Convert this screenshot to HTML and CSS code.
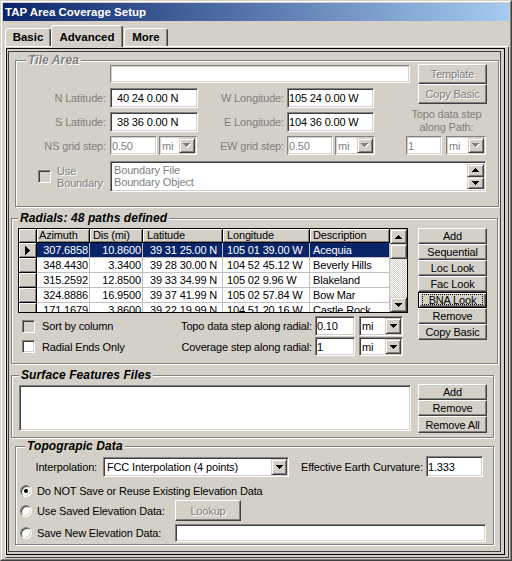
FILE: index.html
```html
<!DOCTYPE html>
<html>
<head>
<meta charset="utf-8">
<title>TAP Area Coverage Setup</title>
<link rel="stylesheet" href="styles.css">
</head>
<body>
<div class="window"><div class="window-inner">
  <div class="titlebar">TAP Area Coverage Setup</div>
  <div class="tabs">
    <div class="tab tab-basic">Basic</div>
    <div class="tab tab-adv">Advanced</div>
    <div class="tab tab-more">More</div>
  </div>
  <div class="page"><div class="frame1"><div class="frame2">

    <!-- Tile Area -->
    <div class="group g-tile">
      <div class="legend lg-tile emb">Tile Area</div>
      <div class="tile-top">
        <div class="tile-left">
          <div class="trow t1"><div class="edit soft w300 ml94"></div></div>
          <div class="trow t2">
            <span class="lbl lw94 gray">N Latitude:</span>
            <div class="edit w88 lat">40 24 0.00 N</div>
            <span class="lbl lw89 gray">W Longitude:</span>
            <div class="edit w87">105 24 0.00 W</div>
          </div>
          <div class="trow t3">
            <span class="lbl lw94 gray">S Latitude:</span>
            <div class="edit w88 lat">38 36 0.00 N</div>
            <span class="lbl lw89 gray">E Longitude:</span>
            <div class="edit w87">104 36 0.00 W</div>
          </div>
          <div class="trow t4">
            <span class="lbl lw94 gray">NS grid step:</span>
            <div class="edit soft gray w47">0.50</div>
            <div class="combo soft dis w38 ml2"><span class="ctext">mi</span><span class="cbtn"><svg class="ar" width="8" height="5" viewBox="0 0 8 5"><path fill="#fff" d="M1 1h7v1H1zM2 2h5v1H2zM3 3h3v1H3zM4 4h1v1H4z"/><path fill="#808080" d="M0 0h7v1H0zM1 1h5v1H1zM2 2h3v1H2zM3 3h1v1H3z"/></svg></span></div>
            <span class="lbl lw90 gray">EW grid step:</span>
            <div class="edit soft gray w46">0.50</div>
            <div class="combo soft dis w40 ml2"><span class="ctext">mi</span><span class="cbtn"><svg class="ar" width="8" height="5" viewBox="0 0 8 5"><path fill="#fff" d="M1 1h7v1H1zM2 2h5v1H2zM3 3h3v1H3zM4 4h1v1H4z"/><path fill="#808080" d="M0 0h7v1H0zM1 1h5v1H1zM2 2h3v1H2zM3 3h1v1H3z"/></svg></span></div>
          </div>
        </div>
        <div class="tile-right">
          <div class="btn dis tb1">Template</div>
          <div class="btn dis tb2">Copy Basic</div>
          <div class="topo-path gray">Topo data step<br>along Path:</div>
          <div class="trow tr-topo">
            <div class="edit soft gray w36">1</div>
            <div class="combo soft dis w40"><span class="ctext">mi</span><span class="cbtn"><svg class="ar" width="8" height="5" viewBox="0 0 8 5"><path fill="#fff" d="M1 1h7v1H1zM2 2h5v1H2zM3 3h3v1H3zM4 4h1v1H4z"/><path fill="#808080" d="M0 0h7v1H0zM1 1h5v1H1zM2 2h3v1H2zM3 3h1v1H3z"/></svg></span></div>
          </div>
        </div>
      </div>
      <div class="tile-bottom">
        <div class="ub">
          <div class="chk graybox ub-chk"></div>
          <div class="ub-lbl emb">Use<br>Boundary</div>
        </div>
        <div class="listbox lb-bound">
          <div class="lb-items gray"><div>Boundary File</div><div>Boundary Object</div></div>
          <div class="lb-sb">
            <div class="sbtn"><svg width="7" height="4" viewBox="0 0 7 4"><path d="M3 0h1v1H3zM2 1h3v1H2zM1 2h5v1H1zM0 3h7v1H0z"/></svg></div>
            <div class="sbtn"><svg width="7" height="4" viewBox="0 0 7 4"><path d="M0 0h7v1H0zM1 1h5v1H1zM2 2h3v1H2zM3 3h1v1H3z"/></svg></div>
          </div>
        </div>
      </div>
    </div>

    <!-- Radials -->
    <div class="group g-rad">
      <div class="legend lg-rad">Radials: 48 paths defined</div>
      <div class="rad-body">
        <div class="rad-left">
          <div class="sgrid">
            <div class="sg-cells">
              <div class="sg-row sg-head">
                <div class="c fx c0"></div>
                <div class="c fx c1 hp2">Azimuth</div>
                <div class="c fx c2 hp3">Dis (mi)</div>
                <div class="c fx c3 hp4">Latitude</div>
                <div class="c fx c4 hp4">Longitude</div>
                <div class="c fx c5 hp3">Description</div>
              </div>
              <div class="sg-row sel">
                <div class="c fx c0"><svg width="5" height="9" viewBox="0 0 5 9"><path d="M0 0h1v9H0zM1 1h1v7H1zM2 2h1v5H2zM3 3h1v3H3zM4 4h1v1H4z"/></svg></div>
                <div class="c c1 num">307.6858</div>
                <div class="c c2 num">10.8600</div>
                <div class="c c3 latc">39 31 25.00 N</div>
                <div class="c c4 lon">105 01 39.00 W</div>
                <div class="c c5 desc">Acequia</div>
              </div>
              <div class="sg-row">
                <div class="c fx c0"></div>
                <div class="c c1 num">348.4430</div>
                <div class="c c2 num">3.3400</div>
                <div class="c c3 latc">39 28 30.00 N</div>
                <div class="c c4 lon">104 52 45.12 W</div>
                <div class="c c5 desc">Beverly Hills</div>
              </div>
              <div class="sg-row">
                <div class="c fx c0"></div>
                <div class="c c1 num">315.2592</div>
                <div class="c c2 num">12.8500</div>
                <div class="c c3 latc">39 33 34.99 N</div>
                <div class="c c4 lon">105 02 9.96 W</div>
                <div class="c c5 desc">Blakeland</div>
              </div>
              <div class="sg-row">
                <div class="c fx c0"></div>
                <div class="c c1 num">324.8886</div>
                <div class="c c2 num">16.9500</div>
                <div class="c c3 latc">39 37 41.99 N</div>
                <div class="c c4 lon">105 02 57.84 W</div>
                <div class="c c5 desc">Bow Mar</div>
              </div>
              <div class="sg-row">
                <div class="c fx c0"></div>
                <div class="c c1 num">171.1679</div>
                <div class="c c2 num">3.8600</div>
                <div class="c c3 latc">39 22 19.99 N</div>
                <div class="c c4 lon">104 51 20.16 W</div>
                <div class="c c5 desc">Castle Rock</div>
              </div>
            </div>
            <div class="vscroll">
              <div class="vbtn"><svg width="7" height="4" viewBox="0 0 7 4"><path d="M3 0h1v1H3zM2 1h3v1H2zM1 2h5v1H1zM0 3h7v1H0z"/></svg></div>
              <div class="vthumb"></div>
              <div class="vtrack"></div>
              <div class="vbtn"><svg width="7" height="4" viewBox="0 0 7 4"><path d="M0 0h7v1H0zM1 1h5v1H1zM2 2h3v1H2zM3 3h1v1H3z"/></svg></div>
            </div>
          </div>
          <div class="rad-row ra">
            <div class="chk graybox"></div><span class="chk-lbl">Sort by column</span>
            <span class="rlabel">Topo data step along radial:</span>
            <div class="edit w40">0.10</div>
            <div class="combo w44 ml4"><span class="ctext">mi</span><span class="cbtn"><svg class="ar" width="7" height="4" viewBox="0 0 7 4"><path d="M0 0h7v1H0zM1 1h5v1H1zM2 2h3v1H2zM3 3h1v1H3z"/></svg></span></div>
          </div>
          <div class="rad-row rb">
            <div class="chk"></div><span class="chk-lbl">Radial Ends Only</span>
            <span class="rlabel">Coverage step along radial:</span>
            <div class="edit w40">1</div>
            <div class="combo w44 ml4"><span class="ctext">mi</span><span class="cbtn"><svg class="ar" width="7" height="4" viewBox="0 0 7 4"><path d="M0 0h7v1H0zM1 1h5v1H1zM2 2h3v1H2zM3 3h1v1H3z"/></svg></span></div>
          </div>
        </div>
        <div class="btncol rad-btns">
          <div class="btn">Add</div>
          <div class="btn">Sequential</div>
          <div class="btn">Loc Look</div>
          <div class="btn">Fac Look</div>
          <div class="btn focus"><span class="focus-rect">BNA Look</span></div>
          <div class="btn">Remove</div>
          <div class="btn">Copy Basic</div>
        </div>
      </div>
    </div>

    <!-- Surface Features Files -->
    <div class="group g-surf">
      <div class="legend lg-surf">Surface Features Files</div>
      <div class="surf-body">
        <div class="listbox lb-surf"></div>
        <div class="btncol surf-btns">
          <div class="btn b16">Add</div>
          <div class="btn b16">Remove</div>
          <div class="btn b17">Remove All</div>
        </div>
      </div>
    </div>

    <!-- Topograpic Data -->
    <div class="group g-topo">
      <div class="legend lg-topo">Topograpic Data</div>
      <div class="topo-r1">
        <span class="lbl-interp">Interpolation:</span>
        <div class="combo combo-interp"><span class="ctext">FCC Interpolation (4 points)</span><span class="cbtn"><svg class="ar" width="7" height="4" viewBox="0 0 7 4"><path d="M0 0h7v1H0zM1 1h5v1H1zM2 2h3v1H2zM3 3h1v1H3z"/></svg></span></div>
        <span class="lbl-eec">Effective Earth Curvature:</span>
        <div class="edit edit-eec">1.333</div>
      </div>
      <div class="rrow rr1"><div class="radio on"></div><span>Do NOT Save or Reuse Existing Elevation Data</span></div>
      <div class="rrow rr2"><div class="radio"></div><span class="rlbl">Use Saved Elevation Data:</span><div class="btn dis lookup">Lookup</div></div>
      <div class="rrow rr3"><div class="radio"></div><span class="rlbl">Save New Elevation Data:</span><div class="edit save-edit"></div></div>
    </div>

  </div></div></div>
</div></div>
</body>
</html>
```

FILE: styles.css
```css
* { box-sizing: border-box; }

body {
  margin: 0;
  background: #d4d0c8;
  font-family: "Liberation Sans", Arial, sans-serif;
  font-size: 11px;
  letter-spacing: -0.15px;
  color: #000;
}

/* window chrome */
.window {
  width: 512px;
  height: 561px;
  border: 1px solid;
  border-color: #d4d0c8 #404040 #404040 #d4d0c8;
  background: #d4d0c8;
  overflow: hidden;
}
.window-inner {
  height: 100%;
  border: 1px solid;
  border-color: #fff #808080 #808080 #fff;
  padding: 1px;
}
.titlebar {
  height: 18px;
  background: linear-gradient(to right, #0a246a, #a6caf0);
  color: #fff;
  font-weight: bold;
  font-size: 11.5px;
  letter-spacing: 0;
  line-height: 18px;
  padding-left: 2px;
  white-space: nowrap;
}

/* tabs */
.tabs {
  display: flex;
  align-items: flex-end;
  height: 25px;
  padding-left: 2px;
}
.tab {
  height: 18px;
  border: 1px solid;
  border-bottom: none;
  border-color: #fff #404040 transparent #fff;
  box-shadow: inset -1px 0 0 #808080;
  border-radius: 3px 3px 0 0;
  background: #d4d0c8;
  font-weight: bold;
  font-size: 11.5px;
  letter-spacing: 0;
  line-height: 16px;
  text-align: center;
  white-space: nowrap;
}
.tab-basic { width: 46px; }
.tab-adv {
  width: 72px;
  height: 22px;
  margin-bottom: -1px;
  padding-top: 3px;
  position: relative;
  z-index: 1;
}
.tab-more { width: 44px; margin-left: 1px; }

/* page frames */
.page {
  margin-left: 2px;
  width: 504px;
  height: 512px;
  border: 1px solid;
  border-color: #fff #404040 #404040 #fff;
  padding: 1px 3px 2px 0;
}
.frame1 {
  height: 100%;
  border: 1px solid #000;
  padding: 2px 3px 2px 1px;
}
.frame2 {
  height: 100%;
  border: 1px solid #404040;
}

/* group boxes */
.group {
  position: relative;
  border: 1px solid #808080;
  box-shadow: inset 1px 1px 0 #fff, 1px 1px 0 #fff;
}
.g-tile { margin: 8px 0 0 6px; width: 484px; height: 147px; }
.g-rad  { margin: 11px 0 0 2px; width: 487px; height: 146px; }
.g-surf { margin: 11px 0 0 2px; width: 483px; height: 63px; }
.g-topo { margin: 8px 0 0 6px; width: 479px; height: 99px; }

.legend {
  position: absolute;
  top: -8px;
  padding: 0 2px;
  background: #d4d0c8;
  font-weight: bold;
  font-style: italic;
  font-size: 12px;
  letter-spacing: 0.1px;
  line-height: 14px;
  white-space: nowrap;
}
.lg-tile { left: 10px; }
.lg-rad  { left: 6px; }
.lg-surf { left: 7px; }
.lg-topo { left: 9px; }

.gray { color: #808080; }
.emb { color: #808080; text-shadow: 1px 1px 0 #fff; }

/* basic controls */
.edit {
  flex: none;
  display: flex;
  align-items: center;
  background: #fff;
  border: 1px solid;
  border-color: #808080 #fff #fff #808080;
  box-shadow: inset 1px 1px 0 #404040, inset -1px -1px 0 #d4d0c8;
  padding-left: 1px;
  white-space: nowrap;
  overflow: hidden;
  height: 100%;
}
.edit.soft {
  box-shadow: inset 1px 1px 0 #d4d0c8, inset -1px -1px 0 #d4d0c8;
}
.edit.lat { padding-left: 6px; }

.combo {
  flex: none;
  display: flex;
  height: 100%;
  background: #fff;
  border: 1px solid;
  border-color: #808080 #fff #fff #808080;
  box-shadow: inset 1px 1px 0 #404040, inset -1px -1px 0 #d4d0c8;
  padding: 1px;
}
.combo.soft {
  box-shadow: inset 1px 1px 0 #d4d0c8, inset -1px -1px 0 #d4d0c8;
}
.ctext {
  flex: 1;
  display: flex;
  align-items: center;
  white-space: nowrap;
  overflow: hidden;
  padding-left: 1px;
}
.combo.dis .ctext { color: #808080; }
.cbtn {
  flex: none;
  width: 16px;
  display: flex;
  align-items: center;
  justify-content: center;
  background: #d4d0c8;
  border: 1px solid;
  border-color: #d4d0c8 #404040 #404040 #d4d0c8;
  box-shadow: inset 1px 1px 0 #fff, inset -1px -1px 0 #808080;
}
.ar { display: block; fill: #000; }

.btn {
  flex: none;
  display: flex;
  align-items: center;
  justify-content: center;
  background: #d4d0c8;
  border: 1px solid;
  border-color: #fff #404040 #404040 #fff;
  box-shadow: inset -1px -1px 0 #808080;
  white-space: nowrap;
}
.btn.dis { color: #808080; text-shadow: 1px 1px 0 #fff; }
.btn.focus {
  border-color: #000;
  box-shadow: inset 1px 1px 0 #fff, inset -1px -1px 0 #404040, inset -2px -2px 0 #808080;
  align-items: stretch;
}
.focus-rect {
  flex: 1;
  margin: 1px 3px 2px 3px;
  border: 1px dotted #000;
  display: flex;
  align-items: center;
  justify-content: center;
}

.chk {
  flex: none;
  width: 13px;
  height: 13px;
  background: #fff;
  border: 1px solid;
  border-color: #808080 #fff #fff #808080;
  box-shadow: inset 1px 1px 0 #404040, inset -1px -1px 0 #d4d0c8;
}
.chk.graybox { background: #d4d0c8; }

.radio {
  flex: none;
  width: 12px;
  height: 12px;
  border-radius: 50%;
  background: #fff;
  border: 1px solid;
  border-color: #808080 #fff #fff #808080;
  box-shadow: inset 1px 1px 0 #404040, inset -1px -1px 0 #d4d0c8;
  display: flex;
  align-items: center;
  justify-content: center;
}
.radio.on::after {
  content: "";
  width: 4px;
  height: 4px;
  border-radius: 50%;
  background: #000;
}

.listbox {
  flex: none;
  background: #fff;
  border: 1px solid;
  border-color: #808080 #fff #fff #808080;
  box-shadow: inset 1px 1px 0 #404040, inset -1px -1px 0 #d4d0c8;
}

/* tile area */
.tile-top { display: flex; }
.tile-left { width: 390px; flex: none; }
.trow { display: flex; align-items: center; }
.t1 { margin-top: 4px; height: 18px; }
.t2 { margin-top: 5px; height: 20px; }
.t3 { margin-top: 4px; height: 20px; }
.t4 { margin-top: 4px; height: 19px; }
.lbl { flex: none; text-align: right; white-space: nowrap; }
.lw94 { width: 94px; padding-right: 4px; }
.lw89 { width: 89px; padding-right: 3px; }
.lw90 { width: 90px; padding-right: 3px; }
.ml94 { margin-left: 94px; }
.ml2 { margin-left: 2px; }
.ml4 { margin-left: 4px; }
.w300 { width: 300px; }
.w88 { width: 88px; }
.w87 { width: 87px; }
.w47 { width: 47px; }
.w46 { width: 46px; }
.w44 { width: 44px; }
.w40 { width: 40px; }
.w38 { width: 38px; }
.w36 { width: 36px; }

.tile-right {
  width: 81px;
  flex: none;
  display: flex;
  flex-direction: column;
}
.tb1 { margin: 3px 0 0 12px; width: 69px; height: 20px; }
.tb2 { margin-left: 12px; width: 69px; height: 20px; }
.topo-path {
  margin-top: 4px;
  height: 26px;
  line-height: 13px;
  text-align: center;
  white-space: nowrap;
}
.tr-topo { margin-top: 2px; height: 19px; gap: 4px; }

.tile-bottom { display: flex; margin-top: 6px; height: 31px; }
.ub {
  width: 94px;
  flex: none;
  display: flex;
  align-items: flex-start;
  padding-left: 22px;
}
.ub-chk { margin-top: 9px; }
.ub-lbl { margin: 4px 0 0 6px; line-height: 12px; white-space: nowrap; }
.lb-bound {
  width: 376px;
  height: 31px;
  display: flex;
  padding: 2px 1px 2px 2px;
}
.lb-items { flex: 1; line-height: 12px; padding-left: 1px; white-space: nowrap; }
.lb-sb { width: 17px; display: flex; flex-direction: column; }
.sbtn {
  height: 14px;
  display: flex;
  align-items: center;
  justify-content: center;
  background: #d4d0c8;
  border: 1px solid;
  border-color: #d4d0c8 #404040 #404040 #d4d0c8;
  box-shadow: inset 1px 1px 0 #fff, inset -1px -1px 0 #808080;
}

/* radials */
.rad-body { display: flex; margin-top: 9px; }
.rad-left { margin-left: 6px; width: 390px; flex: none; }
.btncol { display: flex; flex-direction: column; width: 69px; flex: none; }
.rad-btns { margin-left: 10px; }
.rad-btns .btn { height: 16px; }

.sgrid {
  display: flex;
  width: 390px;
  height: 85px;
  border: 1px solid #000;
  background: #fff;
  overflow: hidden;
}
.sg-cells { width: 371px; flex: none; overflow: hidden; }
.sg-row { display: flex; height: 15px; }
.sg-head { height: 14px; }
.c {
  flex: none;
  height: 100%;
  border-right: 1px solid #c0c0c0;
  border-bottom: 1px solid #c0c0c0;
  white-space: nowrap;
  overflow: hidden;
  line-height: 15px;
}
.sg-head .c { line-height: 13px; }
.fx {
  background: #d4d0c8;
  border-color: #000;
  box-shadow: inset 1px 1px 0 #fff, inset -1px -1px 0 #808080;
}
.c0 { width: 18px; display: flex; align-items: center; justify-content: center; }
.c1 { width: 53px; }
.c2 { width: 53px; }
.c3 { width: 80px; }
.c4 { width: 87px; }
.c5 { width: 80px; }
.hp2 { padding-left: 2px; }
.hp3 { padding-left: 3px; }
.hp4 { padding-left: 4px; }
.num { text-align: right; padding-right: 1px; }
.latc { padding-left: 7px; }
.lon { padding-left: 4px; }
.desc { padding-left: 3px; }
.sel .c:not(.fx) { background: #0a246a; color: #fff; }

.vscroll {
  width: 17px;
  flex: none;
  display: flex;
  flex-direction: column;
  background-color: #d4d0c8;
  background-image: repeating-conic-gradient(#fff 0% 25%, #d4d0c8 0% 50%);
  background-size: 2px 2px;
}
.vbtn, .vthumb {
  height: 15px;
  flex: none;
  display: flex;
  align-items: center;
  justify-content: center;
  background: #d4d0c8;
  border: 1px solid;
  border-color: #d4d0c8 #404040 #404040 #d4d0c8;
  box-shadow: inset 1px 1px 0 #fff, inset -1px -1px 0 #808080;
}
.vtrack { flex: 1; }

.rad-row {
  display: flex;
  align-items: center;
  padding: 0 5px 0 4px;
}
.ra { margin-top: 3px; height: 20px; }
.rb { margin-top: 1px; height: 19px; }
.chk-lbl { margin-left: 7px; white-space: nowrap; }
.rlabel { margin-left: auto; margin-right: 3px; white-space: nowrap; }

/* surface */
.surf-body { display: flex; }
.lb-surf { margin: 9px 0 0 7px; width: 392px; height: 46px; }
.surf-btns { margin: 8px 0 0 7px; }
.b16 { height: 16px; }
.b17 { height: 17px; }

/* topographic */
.topo-r1 {
  display: flex;
  align-items: center;
  margin-top: 9px;
  height: 21px;
}
.lbl-interp {
  width: 84px;
  flex: none;
  text-align: right;
  padding-right: 3px;
  white-space: nowrap;
}
.combo-interp { margin-left: 3px; width: 186px; height: 20px; }
.combo-interp .ctext { padding-left: 2px; }
.lbl-eec { margin-left: 12px; width: 125px; flex: none; white-space: nowrap; }
.edit-eec { width: 57px; height: 21px; }

.rrow { display: flex; align-items: center; padding-left: 4px; white-space: nowrap; }
.rrow .radio { margin-right: 5px; }
.rr1 { margin-top: 5px; height: 17px; }
.rr2 { margin-top: 1px; height: 21px; }
.rr3 { margin-top: 3px; height: 18px; }
.rlbl { width: 138px; flex: none; }
.lookup { width: 66px; height: 21px; }
.save-edit { width: 311px; height: 18px; }
```
